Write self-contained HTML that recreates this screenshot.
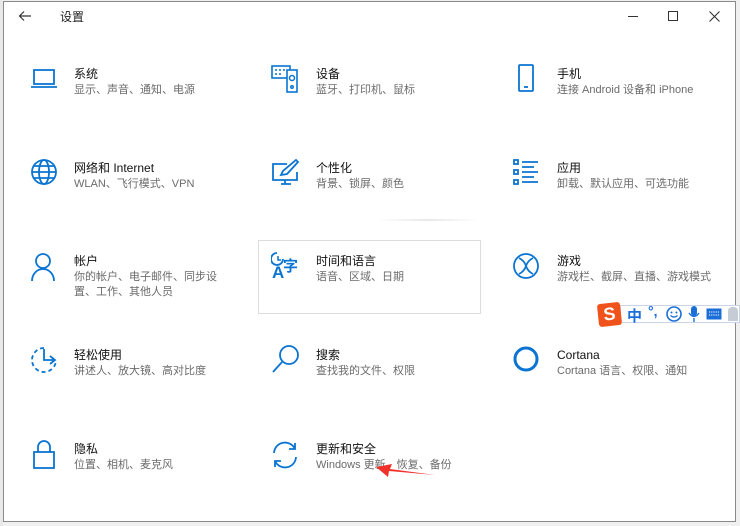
<!DOCTYPE html>
<html><head><meta charset="utf-8"><style>
*{margin:0;padding:0;box-sizing:border-box}
body{width:740px;height:526px;background:#f0f0f0;position:relative;overflow:hidden;font-family:"Liberation Sans","Noto Sans CJK SC",sans-serif}
.win{position:absolute;left:3px;top:1px;width:733px;height:521px;background:#fff;border:1px solid #8a8a8a}
.t{position:absolute;font-size:12px;color:#111;line-height:14px;white-space:nowrap}
.s{position:absolute;font-size:11px;color:#6b6b6b;line-height:15px;white-space:nowrap}
svg.i{position:absolute;fill:none;stroke:#0a74d2;stroke-width:1.8}
.tb{position:absolute;font-size:12px;color:#222}
</style></head><body>
<div class="win"></div>
<div style="position:absolute;left:0;top:0;width:3px;height:526px;background:#e8e8e8"></div>
<svg style="position:absolute;left:18px;top:10px" width="14" height="12" viewBox="0 0 14 12"><path d="M13 6H2M6 1.5L1.5 6 6 10.5" stroke="#333" stroke-width="1.2" fill="none"/></svg>
<div class="tb" style="left:60px;top:8px">设置</div>
<div style="position:absolute;left:628px;top:16px;width:10px;height:1px;background:#333"></div>
<div style="position:absolute;left:668px;top:11px;width:10px;height:10px;border:1px solid #333"></div>
<svg style="position:absolute;left:709px;top:11px" width="11" height="11"><path d="M0.5 0.5L10.5 10.5M10.5 0.5L0.5 10.5" stroke="#333" stroke-width="1.1"/></svg>

<svg class="i" style="left:30px;top:68px" width="28" height="22" viewBox="0 0 28 22"><rect x="4" y="2" width="20" height="14"/><path d="M1 19H27"/></svg>
<div class="t" style="left:74px;top:67px">系统</div><div class="s" style="left:74px;top:83px">显示、声音、通知、电源</div>
<svg class="i" style="left:271px;top:64px" width="30" height="30" viewBox="0 0 30 30"><rect x="1" y="2" width="18" height="12" stroke-width="1.6"/><rect x="16" y="6" width="10" height="22" fill="#fff" stroke-width="1.6"/><circle cx="21" cy="14" r="2.5" stroke-width="1.5"/><circle cx="21" cy="23" r="1.2" stroke-width="1.5"/><path d="M4 6h2M8 6h2M12 6h2M4 10h2M8 10h2" stroke-width="1.6"/></svg>
<div class="t" style="left:316px;top:67px">设备</div><div class="s" style="left:316px;top:83px">蓝牙、打印机、鼠标</div>
<svg class="i" style="left:517px;top:64px" width="18" height="28" viewBox="0 0 18 28"><rect x="2" y="1" width="14" height="26" rx="1"/><path d="M7 23h4"/></svg>
<div class="t" style="left:557px;top:67px">手机</div><div class="s" style="left:557px;top:83px">连接 Android 设备和 iPhone</div>

<svg class="i" style="left:30px;top:158px" width="28" height="28" viewBox="0 0 28 28"><circle cx="14" cy="14" r="12"/><ellipse cx="14" cy="14" rx="5" ry="12"/><path d="M2 14h24M4 8h20M4 20h20"/></svg>
<div class="t" style="left:74px;top:161px">网络和 Internet</div><div class="s" style="left:74px;top:177px">WLAN、飞行模式、VPN</div>
<svg class="i" style="left:271px;top:158px" width="30" height="30" viewBox="0 0 30 30"><path d="M16 6H2v16h24V14"/><path d="M10 26h10M14 22v4"/><path d="M10 17l2-4L25 2l2 2-11 12z"/></svg>
<div class="t" style="left:316px;top:161px">个性化</div><div class="s" style="left:316px;top:177px">背景、锁屏、颜色</div>
<svg class="i" style="left:512px;top:158px" width="28" height="28" viewBox="0 0 28 28"><rect x="2" y="2" width="4" height="4"/><rect x="2" y="12" width="4" height="4"/><rect x="2" y="22" width="4" height="4"/><path d="M10 4h16M10 9h12M10 14h16M10 19h12M10 24h16" stroke-width="1.8"/></svg>
<div class="t" style="left:557px;top:161px">应用</div><div class="s" style="left:557px;top:177px">卸载、默认应用、可选功能</div>

<div style="position:absolute;left:378px;top:219px;width:100px;height:2px;background:linear-gradient(90deg,#fff,#e8e8e8,#fff)"></div>
<div style="position:absolute;left:258px;top:240px;width:223px;height:74px;border:1.5px solid #dcdcdc"></div>

<svg class="i" style="left:30px;top:252px" width="26" height="30" viewBox="0 0 26 30"><circle cx="13" cy="9" r="7"/><path d="M2 29c0-7 5-12 11-12s11 5 11 12"/></svg>
<div class="t" style="left:74px;top:254px">帐户</div><div class="s" style="left:74px;top:270px;line-height:15px">你的帐户、电子邮件、同步设<br>置、工作、其他人员</div>
<div style="position:absolute;left:271px;top:252px;font-size:17px;font-weight:bold;color:#0a74d2;line-height:17px">
<svg style="position:absolute;left:0;top:0" width="14" height="14" viewBox="0 0 14 14"><path d="M6 1a6 6 0 1 0 6 6" fill="none" stroke="#0a74d2" stroke-width="1.8"/><path d="M7 4v4h3" fill="none" stroke="#0a74d2" stroke-width="1.5"/></svg>
<span style="position:absolute;left:1px;top:12px">A</span><span style="position:absolute;left:12px;top:6px;font-size:15px">字</span></div>
<div class="t" style="left:316px;top:254px">时间和语言</div><div class="s" style="left:316px;top:270px">语音、区域、日期</div>
<svg class="i" style="left:512px;top:252px" width="28" height="28" viewBox="0 0 28 28"><circle cx="14" cy="14" r="12"/><path d="M7 6c4 2 6 5 7 8s3 6 7 8M21 6c-4 2-6 5-7 8s-3 6-7 8"/></svg>
<div class="t" style="left:557px;top:254px">游戏</div><div class="s" style="left:557px;top:270px">游戏栏、截屏、直播、游戏模式</div>

<div style="position:absolute;left:620px;top:305px;width:120px;height:18px;background:#fff;border:1px solid #c9d4e8"></div>
<div style="position:absolute;left:598px;top:303px;width:23px;height:23px;background:#f0521c;border-radius:3px;transform:rotate(-6deg);color:#fff;font-weight:bold;font-size:18px;text-align:center;line-height:23px">S</div>
<div style="position:absolute;left:627px;top:305px;font-size:15px;font-weight:bold;color:#1a6ed8">中</div>
<div style="position:absolute;left:648px;top:303px;font-size:14px;font-weight:bold;color:#1a6ed8">°,</div>
<svg style="position:absolute;left:666px;top:306px" width="16" height="16"><circle cx="8" cy="8" r="7" fill="none" stroke="#1a6ed8" stroke-width="1.6"/><circle cx="5.5" cy="6.5" r="1" fill="#1a6ed8"/><circle cx="10.5" cy="6.5" r="1" fill="#1a6ed8"/><path d="M4.5 9.5q3.5 3 7 0" fill="none" stroke="#1a6ed8" stroke-width="1.3"/></svg>
<svg style="position:absolute;left:688px;top:305px" width="12" height="18"><rect x="3" y="1" width="6" height="10" rx="3" fill="#1a6ed8"/><path d="M1 8q5 7 10 0M6 13v4" fill="none" stroke="#1a6ed8" stroke-width="1.4"/></svg>
<svg style="position:absolute;left:706px;top:308px" width="16" height="12"><rect x="0.5" y="0.5" width="15" height="11" fill="#1a6ed8"/><path d="M3 4h10M3 7h10" stroke="#fff" stroke-dasharray="1.2 1"/></svg>
<div style="position:absolute;left:728px;top:307px;width:10px;height:14px;background:#c6ccd6;border-radius:4px 4px 0 0"></div>

<svg class="i" style="left:30px;top:346px" width="28" height="28" viewBox="0 0 28 28"><path d="M14 2a12 12 0 1 0 12 12" stroke-dasharray="4 3"/><path d="M14 3v11h11M20 10l5 4-5 4"/></svg>
<div class="t" style="left:74px;top:348px">轻松使用</div><div class="s" style="left:74px;top:364px">讲述人、放大镜、高对比度</div>
<svg class="i" style="left:271px;top:344px" width="30" height="30" viewBox="0 0 30 30"><circle cx="18" cy="11" r="9"/><path d="M11 18L2 28"/></svg>
<div class="t" style="left:316px;top:348px">搜索</div><div class="s" style="left:316px;top:364px">查找我的文件、权限</div>
<svg class="i" style="left:512px;top:345px" width="28" height="28" viewBox="0 0 28 28"><circle cx="14" cy="14" r="11" stroke-width="3"/></svg>
<div class="t" style="left:557px;top:348px">Cortana</div><div class="s" style="left:557px;top:364px">Cortana 语言、权限、通知</div>

<svg class="i" style="left:32px;top:440px" width="24" height="30" viewBox="0 0 24 30"><path d="M6 12V7a6 6 0 0 1 12 0v5"/><rect x="2" y="12" width="20" height="16"/></svg>
<div class="t" style="left:74px;top:442px">隐私</div><div class="s" style="left:74px;top:458px">位置、相机、麦克风</div>
<svg class="i" style="left:270px;top:440px" width="30" height="30" viewBox="0 0 30 30"><path d="M4 13a11 11 0 0 1 21-4M26 17a11 11 0 0 1-21 4"/><path d="M25 3v6h-6M5 27v-6h6"/></svg>
<div class="t" style="left:316px;top:442px">更新和安全</div><div class="s" style="left:316px;top:458px">Windows 更新、恢复、备份</div>
<svg style="position:absolute;left:370px;top:462px" width="66" height="18"><polygon points="6,5 22,2 20,7 65,13 19,9 18,15" fill="#f0312c"/></svg>
</body></html>
